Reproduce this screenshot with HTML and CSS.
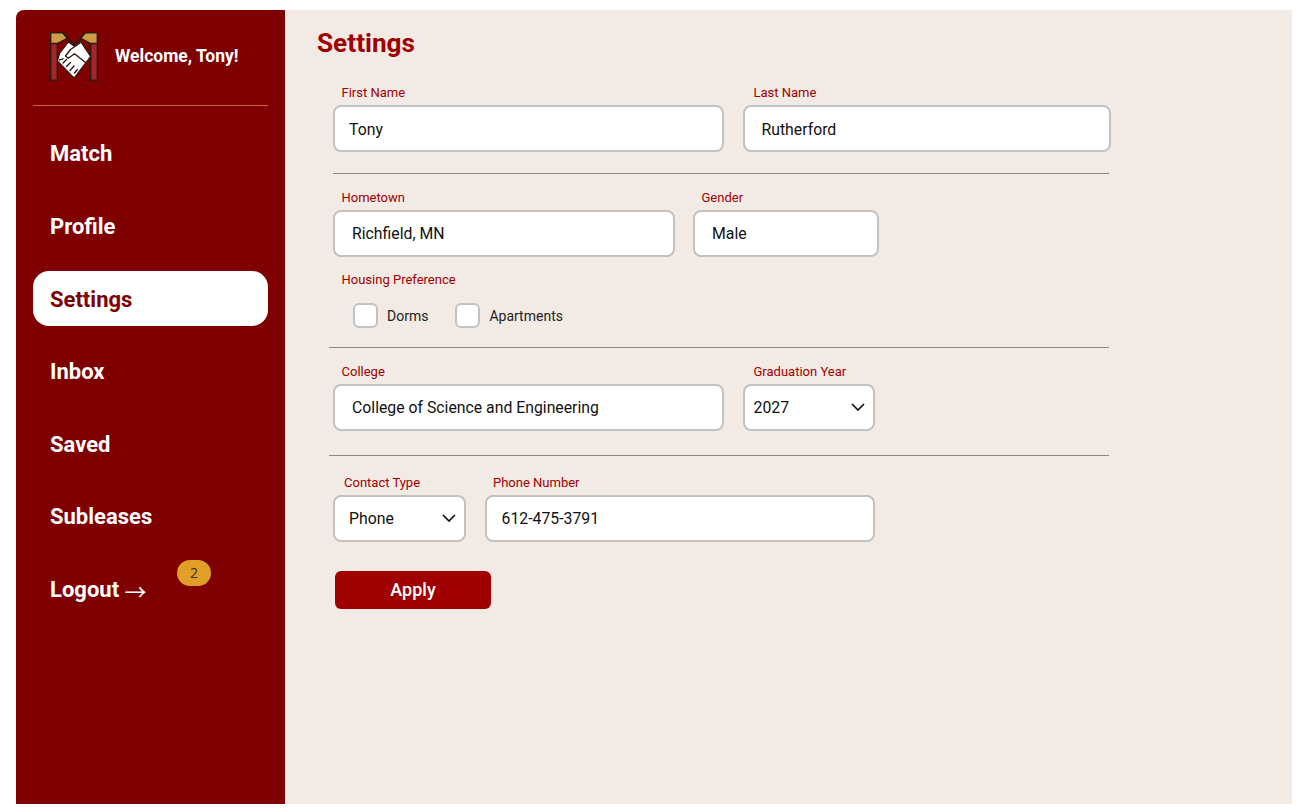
FILE: index.html
```html
<!DOCTYPE html>
<html lang="en">
<head>
    <meta charset="UTF-8">
    <meta name="viewport" content="width=device-width, initial-scale=1.0">
    <title>Settings</title>
    <link rel="stylesheet" href="styles.css">
</head>
<body>
<div class="app">
    <aside class="sidebar">
        <div class="brand">
            <svg class="logo" viewBox="0 0 48 49" width="48" height="49">
                <g stroke="#2e1a14" stroke-width="1.4" stroke-linejoin="miter">
                    <path d="M.7 11h6.6v37.3H.7zM40.7 11h6.6v37.3h-6.6z" fill="#a5262a"/>
                    <path d="M.7.7h12.2l4.3 5.6-9.9 5.2H.7zM47.3.7H35.1l-4.3 5.6 9.9 5.2h6.6z" fill="#cf9c45"/>
                </g>
                <path d="M13 1l11 11.5L35 1" fill="none" stroke="#2e1a14" stroke-width="1.4"/>
                <path d="M18.5 10l5.5 4 6.5-4.5 10 15L24 46 7.5 29l2-7.5z" fill="#fff" stroke="#2e1a14" stroke-width="1.1" stroke-linejoin="round"/>
                <path d="M30 11l-9.5 6.5-5 6.5 2.8 2.2 6.2-4.5L35.5 30.5M9.5 28l3.5-1.2M13 31l3.5-3.5M16.5 34.5l4-4M20 38.5l4-4.5M24.5 41l3-3.5" fill="none" stroke="#2e1a14" stroke-width="1.4" stroke-linecap="round" stroke-linejoin="round"/>
            </svg>
            <span class="welcome">Welcome, Tony!</span>
        </div>
        <nav class="nav">
            <a class="nav-item">Match</a>
            <a class="nav-item">Profile</a>
            <a class="nav-item active">Settings</a>
            <a class="nav-item">Inbox</a>
            <a class="nav-item">Saved</a>
            <a class="nav-item">Subleases</a>
            <a class="nav-item">Logout <span class="arrow">→</span><span class="badge">2</span></a>
        </nav>
    </aside>

    <main class="content">
        <h1>Settings</h1>
        <form class="form">
            <div class="row first">
                <label class="field w390"><span>First Name</span><input type="text" value="Tony" class="pad-15"></label>
                <label class="field w368 gap-left"><span class="in-11">Last Name</span><input type="text" value="Rutherford" class="pad-18"></label>
            </div>
            <hr>
            <div class="row">
                <label class="field w342"><span>Hometown</span><input type="text" value="Richfield, MN" class="pad-18"></label>
                <label class="field w186 gap-left-18"><span>Gender</span><input type="text" value="Male" class="pad-18"></label>
            </div>
            <div class="housing">
                <div class="label-text">Housing Preference</div>
                <div class="checks">
                    <label class="check"><input type="checkbox"><span>Dorms</span></label>
                    <label class="check"><input type="checkbox"><span>Apartments</span></label>
                </div>
            </div>
            <hr class="wide">
            <div class="row">
                <label class="field w390"><span>College</span><input type="text" value="College of Science and Engineering" class="pad-18"></label>
                <label class="field w132 gap-left"><span class="in-11">Graduation Year</span>
                    <div class="select-wrap">
                        <select class="pad-11"><option>2027</option></select>
                        <svg class="chevron" viewBox="0 0 14 8" width="14" height="8"><path d="M1 1l6 6 6-6" fill="none" stroke="#111" stroke-width="1.7"/></svg>
                    </div>
                </label>
            </div>
            <hr class="wide contact-rule">
            <div class="row">
                <label class="field w133"><span class="in-11">Contact Type</span>
                    <div class="select-wrap">
                        <select class="pad-15"><option>Phone</option></select>
                        <svg class="chevron" viewBox="0 0 14 8" width="14" height="8"><path d="M1 1l6 6 6-6" fill="none" stroke="#111" stroke-width="1.7"/></svg>
                    </div>
                </label>
                <label class="field w390 gap-left-19"><span>Phone Number</span><input type="text" value="612-475-3791" class="pad-17"></label>
            </div>
            <button type="button" class="apply">Apply</button>
        </form>
    </main>
</div>
</body>
</html>
```

FILE: styles.css
```css
* {
    box-sizing: border-box;
}
body {
    margin: 0;
    padding: 10px 9px 6px 16px;
    background: #fff;
    font-family: Roboto, "Liberation Sans", sans-serif;
}
.app {
    display: flex;
    height: 794px;
}

/* sidebar */
.sidebar {
    width: 268.5px;
    flex: none;
    background: #7f0000;
    border-top-left-radius: 8px;
    padding: 0 16.5px 0 17px;
}
.brand {
    display: flex;
    align-items: center;
    height: 96px;
    padding: 0 0 2px 17px;
    border-bottom: 1px solid #c9661f;
}
.logo {
    flex: none;
}
.welcome {
    margin: 0 0 1px 17px;
    color: #fff;
    font-size: 17.5px;
    font-weight: 700;
}
.nav {
    display: flex;
    flex-direction: column;
    gap: 17.7px;
    margin-top: 20px;
}
.nav-item {
    position: relative;
    display: flex;
    align-items: center;
    height: 55px;
    padding-left: 17px;
    border-radius: 16px;
    color: #fff;
    font-size: 22px;
    font-weight: 700;
    white-space: pre;
}
.nav-item.active {
    padding-top: 1px;
    background: #fff;
    color: #7f0000;
}
.arrow {
    font-family: "Noto Sans CJK SC", sans-serif;
    font-weight: 400;
}
.badge {
    position: absolute;
    left: 144px;
    top: -2px;
    width: 34px;
    height: 26px;
    border-radius: 13px;
    background: #e0a028;
    color: #4a2a10;
    font-family: "Open Sans", sans-serif;
    font-size: 14px;
    font-weight: 400;
    line-height: 26px;
    text-align: center;
}

/* main area */
.content {
    flex: 1;
    background: #f2eae5;
    padding: 16px 0 0 32.5px;
}
h1 {
    margin: 0;
    color: #a00000;
    font-size: 26.2px;
    font-weight: 700;
    line-height: 34px;
}
.form {
    width: 776px;
    margin-left: 16px;
}
.row {
    display: flex;
}
.row.first {
    margin-top: 25px;
}
.field {
    display: block;
    flex: none;
}
.field > span,
.label-text {
    display: block;
    padding-left: 8.5px;
    color: #a00000;
    font-size: 13px;
    font-weight: 450;
    line-height: 16px;
    margin-bottom: 4px;
}
.field > span.in-11 {
    padding-left: 11px;
}
.w390 { width: 390.5px; }
.w368 { width: 368.5px; }
.w342 { width: 342px; }
.w186 { width: 186px; }
.w132 { width: 132.5px; }
.w133 { width: 133px; }
.gap-left { margin-left: 19px; }
.gap-left-18 { margin-left: 18px; }
.gap-left-19 { margin-left: 18.5px; }
.field input,
.field select {
    display: block;
    width: 100%;
    height: 47px;
    padding-top: 2px;
    border: 2px solid #c2c2c2;
    border-radius: 8px;
    background: #fff;
    color: #111;
    font-family: inherit;
    font-size: 15.8px;
    appearance: none;
    outline: none;
}
.field select {
    padding-top: 0;
}
.pad-11 { padding-left: 9px; }
.pad-15 { padding-left: 14px; }
.pad-17 { padding-left: 15px; }
.pad-18 { padding-left: 17px; }
.select-wrap {
    position: relative;
}
.chevron {
    position: absolute;
    right: 10px;
    top: 19px;
}
hr {
    width: 776px;
    height: 1px;
    margin: 21px 0 15.5px;
    border: 0;
    background: #8a8482;
}
hr.wide {
    width: 780px;
    margin: 19px 0 15.5px -4px;
}
hr.contact-rule {
    margin: 24px 0 19px -4px;
}
.housing {
    margin-top: 15.5px;
}
.checks {
    display: flex;
    gap: 27px;
    margin-top: 15px;
    padding-left: 20px;
}
.check {
    display: flex;
    align-items: center;
    color: #222;
    font-size: 14px;
}
.check input {
    width: 25px;
    height: 25px;
    margin: 0 9px 0 0;
    border: 2px solid #c2c2c2;
    border-radius: 6px;
    background: #fff;
    appearance: none;
}
.apply {
    display: block;
    width: 156px;
    height: 38px;
    margin: 29px 0 0 2px;
    border: 0;
    border-radius: 6px;
    background: #a00000;
    color: #fff;
    font-family: inherit;
    font-size: 18px;
    font-weight: 500;
}
```
